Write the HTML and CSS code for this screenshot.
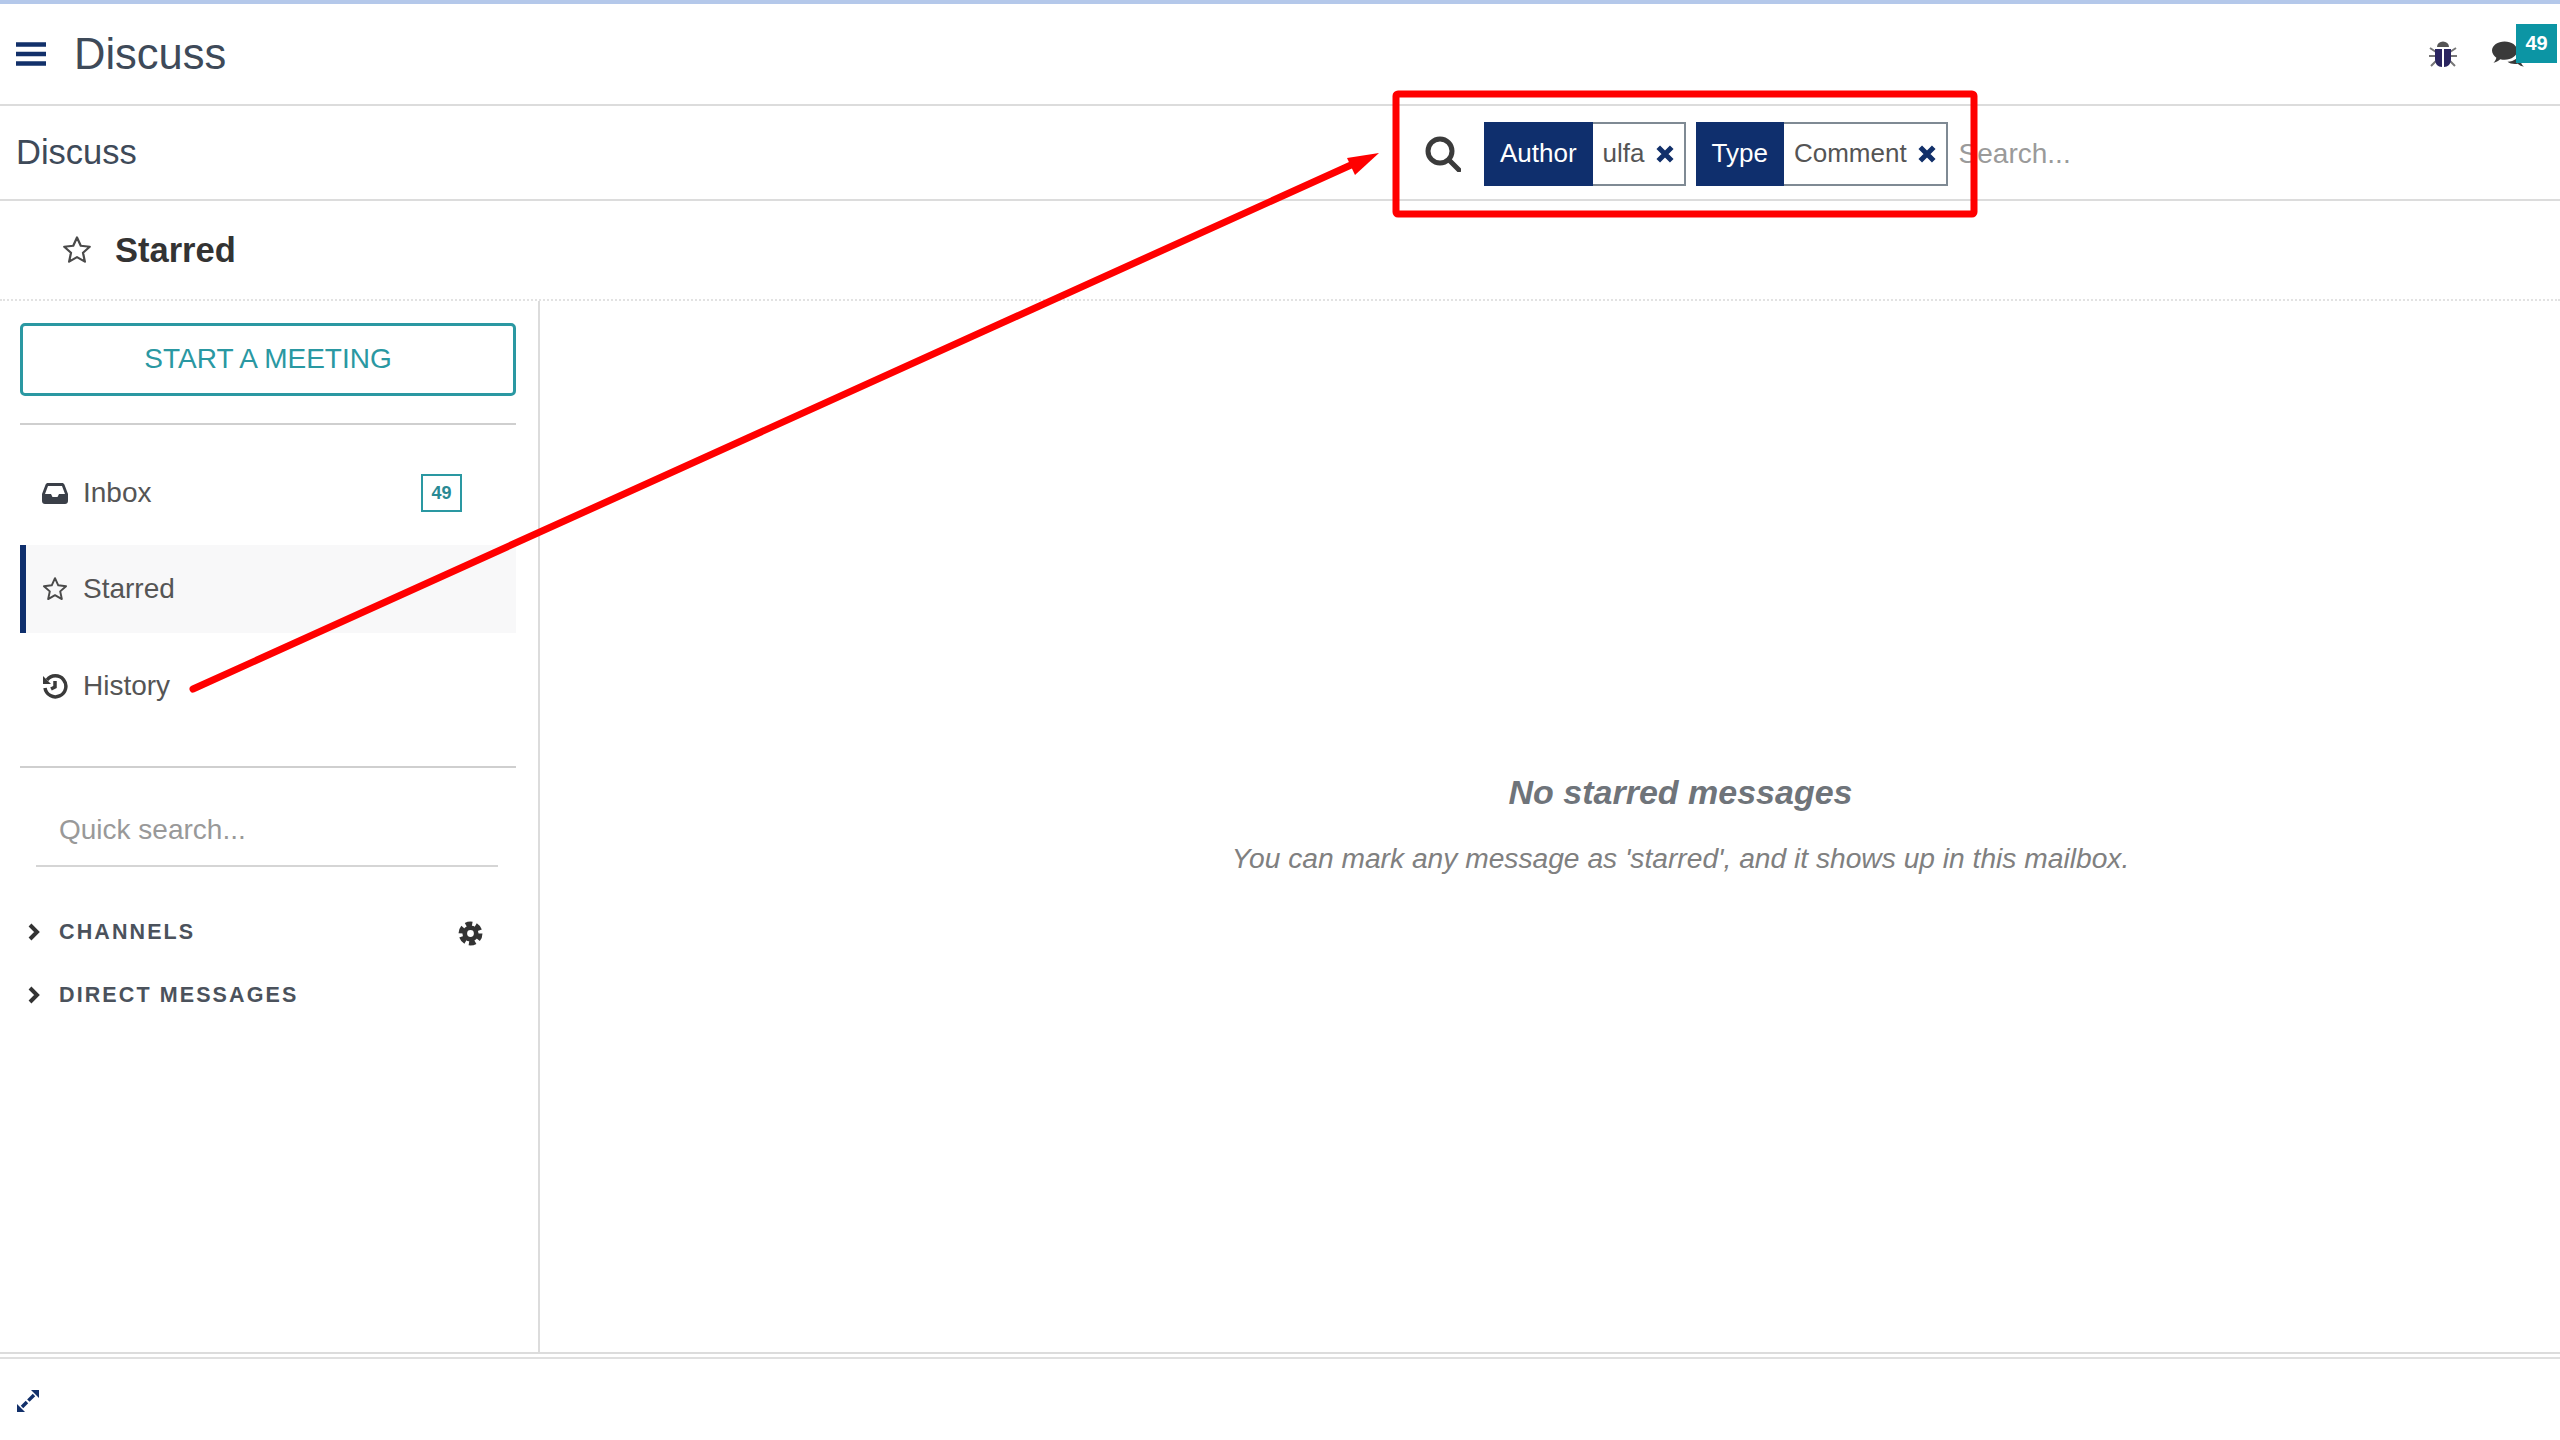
FILE: index.html
```html
<!DOCTYPE html>
<html lang="en">
<head>
<meta charset="utf-8">
<title>Discuss</title>
<link rel="stylesheet" href="styles.css">
</head>
<body>
<div class="app">
  <div class="strip"></div>
  <header class="navbar">
    <div class="nav-left">
      <svg class="burger" viewBox="0 0 30 24"><path d="M0 2.500h30M0 12h30M0 21.500h30"/></svg>
      <span class="brand">Discuss</span>
    </div>
    <div class="nav-right">
      <svg class="bug" viewBox="0 0 28 28"><path class="bug-legs" d="M1 8l6 4M27 8l-6 4M0 16h6M28 16h-6M2 26l5-5M26 26l-5-5"/><path class="bug-head" d="M8 7a6 5.500 0 0 1 12 0z"/><path class="bug-body" d="M6 9h7v18c-4 0-7-3-7-8zM22 9h-7v18c4 0 7-3 7-8z"/></svg>
      <div class="chat">
        <svg class="chat-icon" viewBox="0 0 34 28"><path d="M13 1c7 0 13 4 13 9.500S20 20 13 20c-1.500 0-3-.2-4.500-.6C6.500 21 4 22.500 1.500 23c1.500-1.500 2.500-3.200 3-5.200C2 16 0 13.500 0 10.500 0 5 6 1 13 1z"/><path d="M28 11c3 1.500 5 4 5 6.500 0 2-1 3.800-3 5.200.4 1.700 1.300 3.100 3 4.300-2.500-.3-4.800-1.500-6.500-3-1 .2-2 .3-3 .3-3 0-5.500-.8-7.500-2.300 7 0 12-4 12-11z"/></svg>
        <span class="chat-badge">49</span>
      </div>
    </div>
  </header>
  <section class="control">
    <div class="crumb">Discuss</div>
    <div class="searchview">
      <svg class="search-icon" viewBox="0 0 36 36"><circle cx="15" cy="15" r="12"/><path d="M24 24l10 10"/></svg>
      <div class="facet">
        <span class="facet-name">Author</span>
        <span class="facet-value">ulfa<svg class="x" viewBox="0 0 16 16"><path d="M2 2l12 12M14 2L2 14"/></svg></span>
      </div>
      <div class="facet">
        <span class="facet-name">Type</span>
        <span class="facet-value">Comment<svg class="x" viewBox="0 0 16 16"><path d="M2 2l12 12M14 2L2 14"/></svg></span>
      </div>
      <span class="search-ph">Search...</span>
    </div>
  </section>
  <section class="thread-head">
    <svg class="star star-head" viewBox="0 0 24 24"><path d="M12 2l3 6.600 7.200.8-5.400 4.800 1.500 7.100L12 17.700l-6.300 3.600 1.500-7.100L1.800 9.400 9 8.600z"/></svg>
    <span class="thread-title">Starred</span>
  </section>
  <main class="content">
    <aside class="sidebar">
      <div class="meeting">START A MEETING</div>
      <hr class="rule rule-a">
      <div class="box-item item-inbox">
        <svg class="item-icon" viewBox="0 0 26 22"><path class="solid" fill-rule="evenodd" d="M6 1h14c1.200 0 2 .7 2.500 1.700L26 12v7c0 1.700-1.300 3-3 3H3c-1.700 0-3-1.300-3-3v-7l3.500-9.300C4 1.700 4.800 1 6 1zm0 3l-3 8h6l1.500 3h5L17 12h6l-3-8z"/></svg>
        <span>Inbox</span>
        <span class="count">49</span>
      </div>
      <div class="box-item item-active">
        <svg class="item-icon star" viewBox="0 0 24 24"><path d="M12 2l3 6.600 7.200.8-5.400 4.800 1.500 7.100L12 17.700l-6.300 3.600 1.500-7.100L1.800 9.400 9 8.600z"/></svg>
        <span>Starred</span>
      </div>
      <div class="box-item item-history">
        <svg class="item-icon history" viewBox="0 0 26 26"><path d="M5 7a10.500 10.500 0 1 1-2 8M13 8v6l-4 2"/><path class="solid-arrow" d="M1 3l8 8H1z"/></svg>
        <span>History</span>
      </div>
      <hr class="rule rule-b">
      <div class="quick">Quick search...</div>
      <div class="cat cat-channels">
        <svg class="chev" viewBox="0 0 14 20"><path d="M3 3l7 7-7 7"/></svg>
        <span class="cat-name">CHANNELS</span>
        <svg class="gear" viewBox="0 0 24 24"><circle class="gear-teeth" cx="12" cy="12" r="9"/><circle class="gear-ring" cx="12" cy="12" r="5.500"/></svg>
      </div>
      <div class="cat">
        <svg class="chev" viewBox="0 0 14 20"><path d="M3 3l7 7-7 7"/></svg>
        <span class="cat-name">DIRECT MESSAGES</span>
      </div>
    </aside>
    <div class="empty">
      <div class="empty-title">No starred messages</div>
      <div class="empty-text">You can mark any message as 'starred', and it shows up in this mailbox.</div>
    </div>
  </main>
  <footer class="footer">
    <svg class="expand" viewBox="0 0 26 26"><path class="expand-line" d="M7 19L19 7"/><path class="expand-head" d="M16 2h8v8zM2 16v8h8z"/></svg>
  </footer>
</div>
<svg class="annot" viewBox="0 0 2560 1440">
  <path class="annot-line" d="M193 689L1351 165"/>
  <path class="annot-fill" d="M1379 153l-32 5 8 17z"/>
  <rect class="annot-box" x="1396" y="94" width="578" height="120" rx="2"/>
</svg>
</body>
</html>
```
FILE: styles.css
```css
* { box-sizing: border-box; }
html, body { margin: 0; padding: 0; background: #fff; }
body { font-family: "Liberation Sans", Arial, sans-serif; color: #4c4c4c; overflow: hidden; }
.app { width: 2560px; height: 1440px; display: flex; flex-direction: column; }
.strip { height: 4px; background: #b4c8ea; flex: none; }

.navbar { height: 102px; flex: none; display: flex; align-items: center; justify-content: space-between; border-bottom: 2px solid #dcdcdc; }
.nav-left { display: flex; align-items: center; padding-left: 16px; }
.burger { width: 30px; height: 24px; margin-right: 28px; fill: none; stroke: #12306a; stroke-width: 4.500px; }
.brand { font-size: 43.500px; color: #3e4a59; }
.nav-right { display: flex; align-items: center; padding-right: 35px; }
.bug { width: 28px; height: 28px; margin-right: 35px; }
.bug-legs { fill: none; stroke: #777; stroke-width: 2px; }
.bug-head { fill: #555; }
.bug-body { fill: #2a2560; }
.chat { position: relative; width: 33px; height: 28px; }
.chat-icon { display: block; width: 33px; height: 28px; fill: #3a3a3a; }
.chat-badge { position: absolute; left: 24px; top: -16px; width: 41px; height: 39px; background: #0c95a4; color: #fff; font-size: 20px; font-weight: 700; display: flex; align-items: center; justify-content: center; }

.control { height: 95px; flex: none; display: flex; align-items: center; justify-content: space-between; border-bottom: 2px solid #dcdcdc; padding-left: 16px; }
.crumb { font-size: 34.500px; color: #3e4a59; }
.searchview { display: flex; align-items: center; width: 1135px; padding-top: 2px; }
.search-icon { width: 36px; height: 36px; margin-right: 23px; fill: none; stroke: #3b3b3b; stroke-width: 5px; stroke-linecap: round; }
.facet { display: flex; height: 64px; border: 2px solid #7f8a94; margin-right: 10px; font-size: 26px; }
.facet-name { background: #0f2f6d; color: #fff; display: flex; align-items: center; justify-content: center; padding: 0 16px; margin: -2px 0 -2px -2px; }
.facet-value { display: flex; align-items: center; padding: 0 10px; color: #555; gap: 11px; }
.x { width: 18px; height: 18px; fill: none; stroke: #12306a; stroke-width: 4.500px; }
.search-ph { font-size: 28px; color: #9a9a9a; margin-left: 1px; }

.thread-head { height: 100px; flex: none; display: flex; align-items: center; padding-left: 62px; border-bottom: 2px dotted #e2e2e2; }
.star { fill: none; stroke: #4a4a4a; stroke-width: 1.800px; stroke-linejoin: round; }
.star-head { width: 30px; height: 30px; margin-right: 23px; }
.thread-title { font-size: 34.500px; font-weight: 700; color: #333; }

.content { flex: 1; display: flex; min-height: 0; }
.sidebar { width: 540px; flex: none; border-right: 2px solid #dcdcdc; padding: 22px 22px 0 20px; }
.meeting { height: 73px; padding-bottom: 2px; border: 3px solid #2a98a2; border-radius: 5px; color: #2a98a2; font-size: 28px; display: flex; align-items: center; justify-content: center; }
.rule { border: 0; height: 2px; background: #cfcfcf; margin: 0; }
.rule-a { margin: 27px 0 0; }
.box-item { display: flex; align-items: center; height: 88px; padding-left: 22px; font-size: 28px; color: #555; }
.item-inbox { margin-top: 22px; height: 92px; position: relative; margin-bottom: 6px; }
.item-active { height: 88px; background: #f8f8f9; border-left: 6px solid #0f2f6d; padding-left: 16px; }
.item-history { height: 96px; margin-top: 5px; margin-bottom: 32px; }
.item-icon { width: 26px; height: 26px; margin-right: 15px; flex: none; }
.solid { fill: #3a3f48; }
.history { fill: none; stroke: #3a3a3a; stroke-width: 3.500px; }
.solid-arrow { fill: #3a3a3a; stroke: none; }
.count { position: absolute; left: 401px; top: 27px; width: 41px; height: 38px; border: 2.500px solid #2a98a2; color: #2a8a94; font-size: 18px; font-weight: 700; display: flex; align-items: center; justify-content: center; }
.quick { margin: 33px 18px 0 16px; height: 66px; border-bottom: 2px solid #d5d5d5; padding: 0 0 6px 23px; font-size: 28px; color: #999; display: flex; align-items: center; }
.cat { display: flex; align-items: center; height: 34px; margin-top: 29px; padding-left: 7px; }
.cat-channels { margin-top: 48px; }
.chev { width: 14px; height: 20px; margin-right: 18px; fill: none; stroke: #333; stroke-width: 4px; }
.cat-name { font-size: 21.500px; font-weight: 700; letter-spacing: 2.100px; color: #4b525c; }
.gear { width: 25px; height: 25px; margin: 3px 33px 0 auto; fill: none; }
.gear-teeth { stroke: #333; stroke-width: 5px; stroke-dasharray: 6.100 3.320; }
.gear-ring { stroke: #333; stroke-width: 4.500px; }

.empty { flex: 1; display: flex; flex-direction: column; align-items: center; padding: 472px 0 0 261px; font-style: italic; color: #777; }
.empty-title { font-size: 34px; font-weight: 700; color: #6f747a; }
.empty-text { font-size: 28.200px; margin-top: 30px; color: #808080; }

.footer { height: 88px; flex: none; border-top: 2px solid #dcdcdc; display: flex; align-items: flex-start; padding: 34px 0 0 15px; position: relative; }
.footer::before { content: ""; position: absolute; left: 0; right: 0; top: 3px; height: 2px; background: #dfdfdf; }
.expand { width: 26px; height: 26px; }
.expand-line { fill: none; stroke: #12306a; stroke-width: 3.500px; stroke-dasharray: 7 2 8; }
.expand-head { fill: #12306a; }

.annot { position: absolute; left: 0; top: 0; width: 2560px; height: 1440px; pointer-events: none; }
.annot-line { fill: none; stroke: #f00; stroke-width: 7px; stroke-linecap: round; }
.annot-fill { fill: #f00; }
.annot-box { fill: none; stroke: #f00; stroke-width: 7px; }
```
